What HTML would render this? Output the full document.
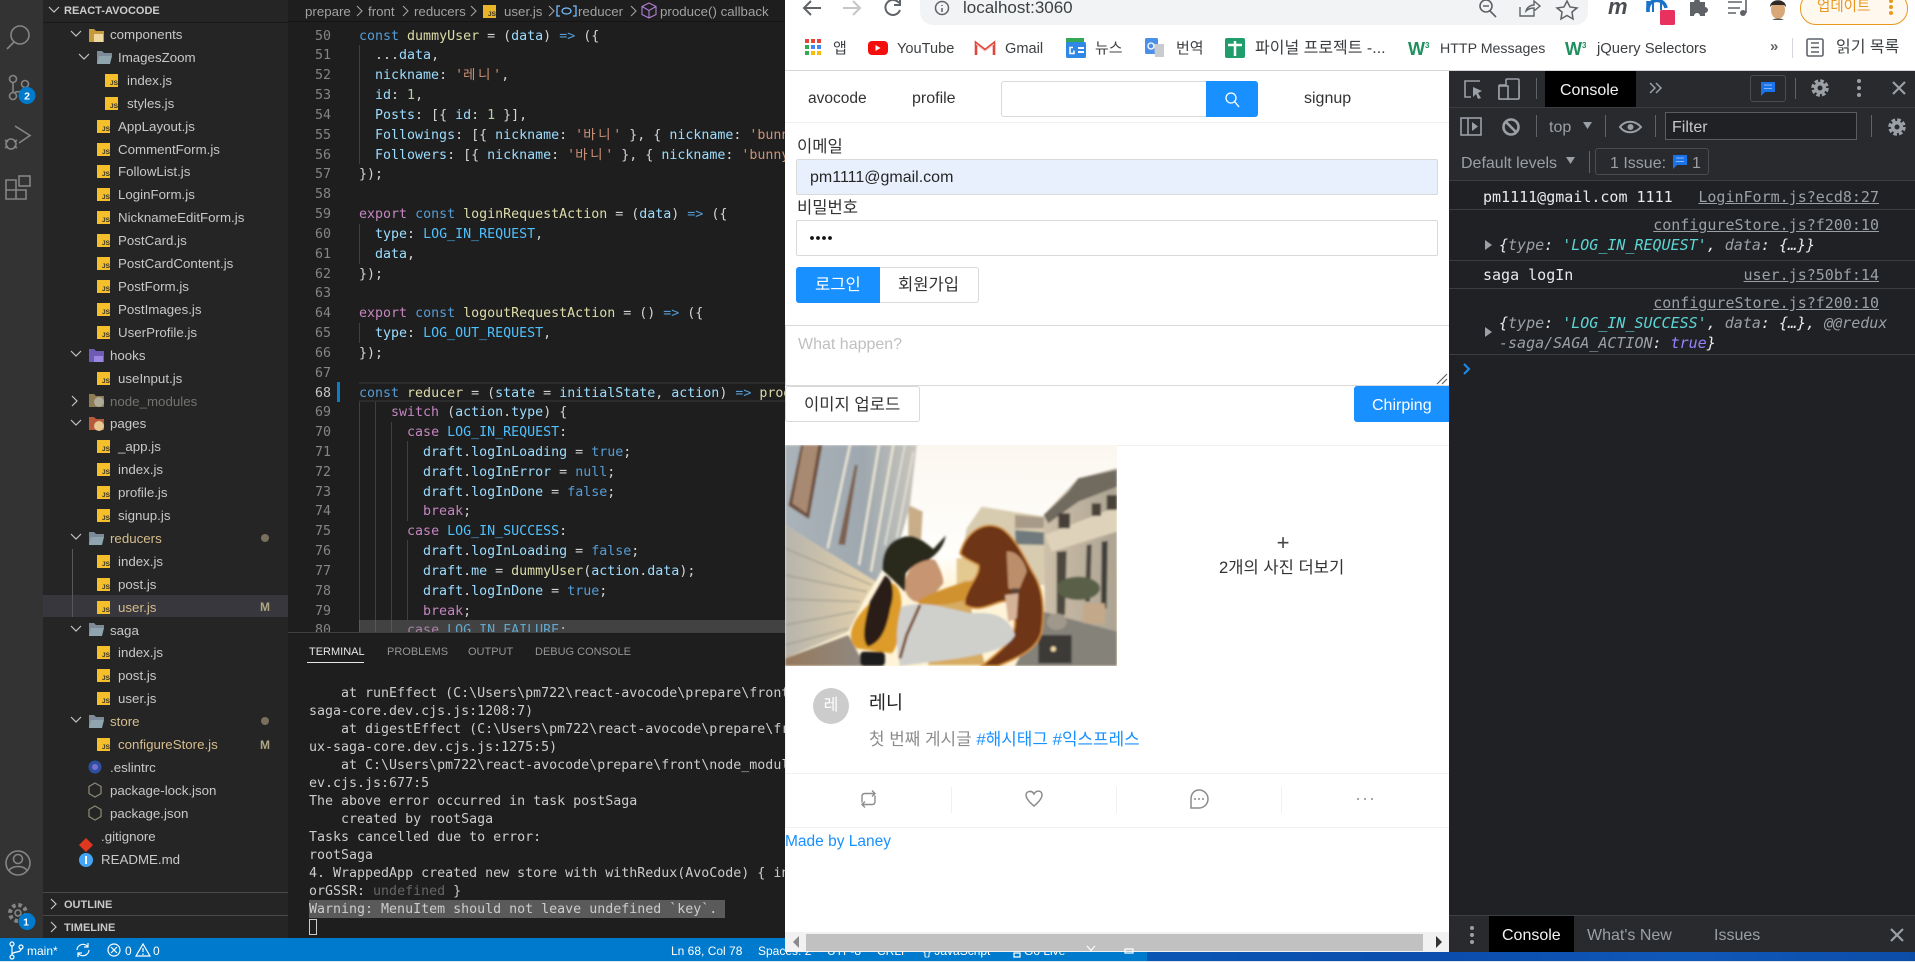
<!DOCTYPE html>
<html lang="ko"><head><meta charset="utf-8"><title>react-avocode</title>
<style>
html,body{margin:0;padding:0;width:1915px;height:962px;overflow:hidden;background:#dfe6ee}
body{position:relative;font-family:"Liberation Sans","Noto Sans CJK KR",sans-serif;color:#222}
.b{position:absolute}
.t{position:absolute;white-space:pre;line-height:20px;height:20px}
.m{font-family:"DejaVu Sans Mono","Noto Sans CJK KR",monospace}
#tree{position:absolute;left:0;top:24px;width:288px;height:850px;overflow:hidden;font-size:13.3px;color:#c8c8c8}
.r{position:relative;height:22.92px;line-height:22.92px;white-space:pre}
.r span{position:absolute;top:0}
.l0 span{left:101px}.l1 span{left:110px}.l2 span{left:118px}.l3 span{left:127px}
.js{position:absolute;top:4px;width:13px;background:#f4bf2a;color:#33302a;font:bold 6.5px/7px "Liberation Sans",sans-serif;text-align:right;padding-top:6px;height:7px;box-sizing:content-box;font-style:normal;overflow:hidden}
.l2 .js{left:97px}.l3 .js{left:105px}
.g{color:#d6bd8d}.dim{color:#73736f}
#code,#nums{position:absolute;top:26.6px;height:605.4px;overflow:hidden;font-family:"DejaVu Sans Mono","Noto Sans CJK KR",monospace;font-size:13.3px;line-height:19.83px}
#code{left:359px;width:440px;color:#d4d4d4}
#nums{left:296px;width:35px;text-align:right;color:#858585}
#code div,#nums div{height:19.83px;white-space:pre}
.k{color:#569cd6}.c{color:#c586c0}.f{color:#dcdcaa}.v{color:#9cdcfe}.o{color:#4fc1ff}.s{color:#ce9178}.n{color:#b5cea8}
.h{letter-spacing:2.8px}
.ig{position:absolute;width:1px;background:#404040}
#term{position:absolute;left:309px;top:685px;height:234px;font-family:"DejaVu Sans Mono",monospace;font-size:13.3px;line-height:18px;color:#cccccc;width:500px;overflow:hidden}
#term div{height:18px;white-space:pre}
.st{font-size:12px;color:#fff;margin-top:1px}
.cm{font-family:"DejaVu Sans Mono","Noto Sans CJK KR",monospace;font-size:15px;color:#e8eaed}
.lnk{color:#9aa0a6;text-decoration:underline;right:36px}
.dt{font-size:16px;color:#9aa0a6;margin-top:1px}
.cl{background:#202124}
.ln{position:absolute;left:1449px;width:466px;height:1px;background:#3c3d40}
.bm{font-size:14.6px;color:#3c4043}
.ko{font-size:16.6px;margin-top:2px}
</style></head><body>

<!-- VS Code -->
<div class="b" style="left:0;top:0;width:43px;height:938px;background:#333333"></div>
<div class="b" style="left:43px;top:0;width:245px;height:938px;background:#252526"></div>
<div class="b" style="left:288px;top:0;width:510px;height:938px;background:#1e1e1e"></div>
<div class="b" style="left:43px;top:595px;width:245px;height:22px;background:#37373d"></div>
<div class="b" style="left:72px;top:549px;width:1px;height:68px;background:#585858"></div>
<div class="b" style="left:43px;top:22px;width:245px;height:1px;background:#1a1a1a"></div>
<div class="t" style="left:64px;top:1px;font-size:11px;font-weight:bold;color:#cccccc">REACT-AVOCODE</div>

<div id="tree">
<div class="r l1"><span>components</span></div>
<div class="r l2"><span>ImagesZoom</span></div>
<div class="r l3"><i class="js">JS</i><span>index.js</span></div>
<div class="r l3"><i class="js">JS</i><span>styles.js</span></div>
<div class="r l2"><i class="js">JS</i><span>AppLayout.js</span></div>
<div class="r l2"><i class="js">JS</i><span>CommentForm.js</span></div>
<div class="r l2"><i class="js">JS</i><span>FollowList.js</span></div>
<div class="r l2"><i class="js">JS</i><span>LoginForm.js</span></div>
<div class="r l2"><i class="js">JS</i><span>NicknameEditForm.js</span></div>
<div class="r l2"><i class="js">JS</i><span>PostCard.js</span></div>
<div class="r l2"><i class="js">JS</i><span>PostCardContent.js</span></div>
<div class="r l2"><i class="js">JS</i><span>PostForm.js</span></div>
<div class="r l2"><i class="js">JS</i><span>PostImages.js</span></div>
<div class="r l2"><i class="js">JS</i><span>UserProfile.js</span></div>
<div class="r l1"><span>hooks</span></div>
<div class="r l2"><i class="js">JS</i><span>useInput.js</span></div>
<div class="r l1"><span class="dim">node_modules</span></div>
<div class="r l1"><span>pages</span></div>
<div class="r l2"><i class="js">JS</i><span>_app.js</span></div>
<div class="r l2"><i class="js">JS</i><span>index.js</span></div>
<div class="r l2"><i class="js">JS</i><span>profile.js</span></div>
<div class="r l2"><i class="js">JS</i><span>signup.js</span></div>
<div class="r l1"><span class="g">reducers</span></div>
<div class="r l2"><i class="js">JS</i><span>index.js</span></div>
<div class="r l2"><i class="js">JS</i><span>post.js</span></div>
<div class="r l2"><i class="js">JS</i><span class="g">user.js</span></div>
<div class="r l1"><span>saga</span></div>
<div class="r l2"><i class="js">JS</i><span>index.js</span></div>
<div class="r l2"><i class="js">JS</i><span>post.js</span></div>
<div class="r l2"><i class="js">JS</i><span>user.js</span></div>
<div class="r l1"><span class="g">store</span></div>
<div class="r l2"><i class="js">JS</i><span class="g">configureStore.js</span></div>
<div class="r l1"><span>.eslintrc</span></div>
<div class="r l1"><span>package-lock.json</span></div>
<div class="r l1"><span>package.json</span></div>
<div class="r l0"><span>.gitignore</span></div>
<div class="r l0"><span>README.md</span></div>
</div>
<div class="t" style="left:260px;top:597px;font-size:12px;font-weight:bold;color:#b0a582">M</div>
<div class="t" style="left:260px;top:735px;font-size:12px;font-weight:bold;color:#b0a582">M</div>
<div class="b" style="left:43px;top:892px;width:245px;height:1px;background:#4a4a4a"></div>
<div class="b" style="left:43px;top:915px;width:245px;height:1px;background:#4a4a4a"></div>
<div class="t" style="left:64px;top:895px;font-size:11px;font-weight:bold;color:#c8c8c8">OUTLINE</div>
<div class="t" style="left:64px;top:918px;font-size:11px;font-weight:bold;color:#c8c8c8">TIMELINE</div>

<!-- breadcrumb -->
<div style="position:absolute;left:0;top:2px;font-size:13.3px;color:#a2a2a2">
<div class="t" style="left:305px;top:0">prepare</div>
<div class="t" style="left:368px;top:0">front</div>
<div class="t" style="left:414px;top:0">reducers</div>
<div class="t" style="left:504px;top:0">user.js</div>
<div class="t" style="left:578px;top:0">reducer</div>
<div class="t" style="left:660px;top:0">produce() callback</div>
</div>
<i class="js" style="left:483px;top:5px;opacity:.95">JS</i>
<div class="b" style="left:288px;top:21px;width:510px;height:1px;background:#141414"></div>

<!-- code -->
<div class="b" style="left:359px;top:382px;width:440px;height:20px;box-sizing:border-box;border:1px solid #2c2c2c;border-width:2px 0"></div>
<div class="b" style="left:337px;top:382px;width:3px;height:20px;background:#0c7dc8"></div>
<div class="ig" style="left:359px;top:45px;height:119px"></div>
<div class="ig" style="left:359px;top:224px;height:40px"></div>
<div class="ig" style="left:359px;top:323px;height:20px"></div>
<div class="ig" style="left:359px;top:402px;height:230px"></div>
<div class="ig" style="left:375px;top:402px;height:230px"></div>
<div class="ig" style="left:391px;top:422px;height:210px"></div>
<div class="ig" style="left:407px;top:441px;height:80px"></div>
<div class="ig" style="left:407px;top:540px;height:80px"></div>
<div id="nums">
<div>50</div><div>51</div><div>52</div><div>53</div><div>54</div><div>55</div><div>56</div><div>57</div><div>58</div><div>59</div><div>60</div><div>61</div><div>62</div><div>63</div><div>64</div><div>65</div><div>66</div><div>67</div><div style="color:#c6c6c6">68</div><div>69</div><div>70</div><div>71</div><div>72</div><div>73</div><div>74</div><div>75</div><div>76</div><div>77</div><div>78</div><div>79</div><div>80</div>
</div>
<div id="code">
<div><span class="k">const</span> <span class="f">dummyUser</span> = (<span class="v">data</span>) <span class="k">=&gt;</span> ({</div>
<div>  ...<span class="v">data</span>,</div>
<div>  <span class="v">nickname</span>: <span class="s">'<span class="h">레니</span>'</span>,</div>
<div>  <span class="v">id</span>: <span class="n">1</span>,</div>
<div>  <span class="v">Posts</span>: [{ <span class="v">id</span>: <span class="n">1</span> }],</div>
<div>  <span class="v">Followings</span>: [{ <span class="v">nickname</span>: <span class="s">'<span class="h">바니</span>'</span> }, { <span class="v">nickname</span>: <span class="s">'bunny'</span> }],</div>
<div>  <span class="v">Followers</span>: [{ <span class="v">nickname</span>: <span class="s">'<span class="h">바니</span>'</span> }, { <span class="v">nickname</span>: <span class="s">'bunny'</span> }],</div>
<div>});</div>
<div> </div>
<div><span class="c">export</span> <span class="k">const</span> <span class="f">loginRequestAction</span> = (<span class="v">data</span>) <span class="k">=&gt;</span> ({</div>
<div>  <span class="v">type</span>: <span class="o">LOG_IN_REQUEST</span>,</div>
<div>  <span class="v">data</span>,</div>
<div>});</div>
<div> </div>
<div><span class="c">export</span> <span class="k">const</span> <span class="f">logoutRequestAction</span> = () <span class="k">=&gt;</span> ({</div>
<div>  <span class="v">type</span>: <span class="o">LOG_OUT_REQUEST</span>,</div>
<div>});</div>
<div> </div>
<div><span class="k">const</span> <span class="f">reducer</span> = (<span class="v">state</span> = <span class="v">initialState</span>, <span class="v">action</span>) <span class="k">=&gt;</span> <span class="f">produce</span>(<span class="v">state</span>)</div>
<div>    <span class="c">switch</span> (<span class="v">action</span>.<span class="v">type</span>) {</div>
<div>      <span class="c">case</span> <span class="o">LOG_IN_REQUEST</span>:</div>
<div>        <span class="v">draft</span>.<span class="v">logInLoading</span> = <span class="k">true</span>;</div>
<div>        <span class="v">draft</span>.<span class="v">logInError</span> = <span class="k">null</span>;</div>
<div>        <span class="v">draft</span>.<span class="v">logInDone</span> = <span class="k">false</span>;</div>
<div>        <span class="c">break</span>;</div>
<div>      <span class="c">case</span> <span class="o">LOG_IN_SUCCESS</span>:</div>
<div>        <span class="v">draft</span>.<span class="v">logInLoading</span> = <span class="k">false</span>;</div>
<div>        <span class="v">draft</span>.<span class="v">me</span> = <span class="f">dummyUser</span>(<span class="v">action</span>.<span class="v">data</span>);</div>
<div>        <span class="v">draft</span>.<span class="v">logInDone</span> = <span class="k">true</span>;</div>
<div>        <span class="c">break</span>;</div>
<div>      <span class="c">case</span> <span class="o">LOG_IN_FAILURE</span>:</div>
</div>
<div class="b" style="left:359px;top:620px;width:440px;height:12px;background:rgba(125,125,125,.38)"></div>

<!-- terminal -->
<div class="b" style="left:288px;top:632px;width:510px;height:306px;background:#1e1e1e;border-top:1px solid #404040;box-sizing:border-box"></div>
<div style="position:absolute;left:0;top:1px;font-size:11px;color:#969696">
<div class="t" style="left:309px;top:641px;color:#e7e7e7">TERMINAL</div>
<div class="t" style="left:387px;top:641px">PROBLEMS</div>
<div class="t" style="left:468px;top:641px">OUTPUT</div>
<div class="t" style="left:535px;top:641px">DEBUG CONSOLE</div>
</div>
<div class="b" style="left:307px;top:662px;width:57px;height:1px;background:#e7e7e7"></div>
<div class="b" style="left:309px;top:900px;width:416px;height:18px;background:#5a5a5a"></div>
<div id="term">
<div>    at runEffect (C:\Users\pm722\react-avocode\prepare\front\node</div>
<div>saga-core.dev.cjs.js:1208:7)</div>
<div>    at digestEffect (C:\Users\pm722\react-avocode\prepare\front\n</div>
<div>ux-saga-core.dev.cjs.js:1275:5)</div>
<div>    at C:\Users\pm722\react-avocode\prepare\front\node_modules\re</div>
<div>ev.cjs.js:677:5</div>
<div>The above error occurred in task postSaga</div>
<div>    created by rootSaga</div>
<div>Tasks cancelled due to error:</div>
<div>rootSaga</div>
<div>4. WrappedApp created new store with withRedux(AvoCode) { initial</div>
<div>orGSSR: <span style="color:#666">undefined</span> }</div>
<div>Warning: MenuItem should not leave undefined `key`.</div>
</div>
<div class="b" style="left:309px;top:919px;width:8px;height:16px;border:1px solid #ccc;box-sizing:border-box"></div>

<!-- status bar -->
<div class="b" style="left:0;top:938px;width:1150px;height:23px;background:#007acc"></div>
<div class="b" style="left:1147px;top:952px;width:768px;height:9px;background:linear-gradient(90deg,#0a55b4,#0b4dac 40%,#1058b8 70%,#0c4da8)"></div>
<div class="t st" style="left:27px;top:940px">main*</div>
<div class="t st" style="left:125px;top:940px">0</div>
<div class="t st" style="left:153px;top:940px">0</div>
<div class="t st" style="left:671px;top:940px">Ln 68, Col 78</div>
<div class="t st" style="left:758px;top:940px">Spaces: 2</div>
<div class="t st" style="left:827px;top:940px">UTF-8</div>
<div class="t st" style="left:877px;top:940px">CRLF</div>
<div class="t st" style="left:923px;top:940px">{} JavaScript</div>
<div class="t st" style="left:1024px;top:940px">Go Live</div>

<!-- Browser -->
<div class="b" style="left:785px;top:0;width:1130px;height:952px;background:#fff"></div>
<div class="b" style="left:920px;top:0;width:668px;height:25px;background:#f1f3f4;border-radius:0 0 13px 13px"></div>
<div class="t" style="left:963px;top:-2px;font-size:17px;color:#3c4043">localhost:3060</div>
<div class="b" style="left:785px;top:70px;width:1130px;height:1px;background:#d5d7da"></div>

<!-- bookmarks -->
<div class="t" style="left:833px;top:39px;font-size:15px;color:#3c4043">앱</div>
<div class="t bm" style="left:897px;top:39px">YouTube</div>
<div class="t bm" style="left:1005px;top:39px">Gmail</div>
<div class="t" style="left:1095px;top:39px;font-size:15px;color:#3c4043">뉴스</div>
<div class="t" style="left:1176px;top:39px;font-size:15px;color:#3c4043">번역</div>
<div class="t" style="left:1255px;top:39px;font-size:16px;color:#3c4043">파이널 프로젝트 -...</div>
<div class="t" style="left:1440px;top:39px;font-size:14.2px;color:#3c4043">HTTP Messages</div>
<div class="t" style="left:1597px;top:39px;font-size:14.8px;color:#3c4043">jQuery Selectors</div>
<div class="t" style="left:1408px;top:39px;font:bold 18px/20px 'Liberation Sans',sans-serif;color:#1f8f5f">W<sup style="font-size:8px;line-height:0;color:#1f8f5f">3</sup></div>
<div class="t" style="left:1565px;top:39px;font:bold 18px/20px 'Liberation Sans',sans-serif;color:#1f8f5f">W<sup style="font-size:8px;line-height:0;color:#1f8f5f">3</sup></div>
<div class="t" style="left:1770px;top:37px;font-size:15px;font-weight:bold;color:#5f6368">»</div>
<div class="t" style="left:1836px;top:38px;font-size:16px;color:#3c4043">읽기 목록</div>
<div class="t" style="left:1617px;top:-3px;font:italic bold 22px/20px 'Liberation Sans',sans-serif;color:#4a4d52;transform:translateX(-9px)">m</div>
<div class="b" style="left:1800px;top:-8px;width:108px;height:33px;border:1.5px solid #e8981f;border-radius:16px;background:#fff8ee;box-sizing:border-box"></div>
<div class="t" style="left:1817px;top:-3px;font-size:14.5px;color:#e8981f">업데이트</div>

<!-- nav -->
<div class="b" style="left:785px;top:122px;width:664px;height:1px;background:#f0f0f0"></div>
<div class="t" style="left:808px;top:89px;font-size:15.5px;color:#333">avocode</div>
<div class="t" style="left:912px;top:89px;font-size:16px;color:#333">profile</div>
<div class="t" style="left:1304px;top:89px;font-size:16px;color:#333">signup</div>
<div class="b" style="left:1001px;top:81px;width:206px;height:36px;border:1px solid #d9d9d9;border-radius:3px 0 0 3px;box-sizing:border-box"></div>
<div class="b" style="left:1206px;top:81px;width:52px;height:36px;background:#1890ff;border-radius:0 3px 3px 0"></div>

<!-- form -->
<div class="t ko" style="left:797px;top:135px;color:#333">이메일</div>
<div class="b" style="left:796px;top:159px;width:642px;height:36px;background:#e8f0fe;border:1px solid #d9d9d9;border-radius:2px;box-sizing:border-box"></div>
<div class="t" style="left:810px;top:168px;font-size:16px;color:#262626">pm1111@gmail.com</div>
<div class="t ko" style="left:797px;top:196px;color:#333">비밀번호</div>
<div class="b" style="left:796px;top:220px;width:642px;height:36px;border:1px solid #d9d9d9;border-radius:2px;box-sizing:border-box"></div>
<div class="b" style="left:796px;top:267px;width:84px;height:36px;background:#1890ff;border-radius:3px 0 0 3px"></div>
<div class="b" style="left:880px;top:267px;width:99px;height:36px;border:1px solid #d9d9d9;border-left:0;border-radius:0 3px 3px 0;box-sizing:border-box"></div>
<div class="t ko" style="left:815px;top:273px;color:#fff">로그인</div>
<div class="t ko" style="left:898px;top:273px;color:#333">회원가입</div>

<div class="b" style="left:785px;top:325px;width:664px;height:61px;border:1px solid #d9d9d9;border-width:1px 0 1px 1px;box-sizing:border-box"></div>
<div class="t" style="left:798px;top:335px;font-size:16px;color:#bfbfbf">What happen?</div>
<div class="b" style="left:785px;top:386px;width:135px;height:36px;border:1px solid #d9d9d9;border-radius:3px;box-sizing:border-box"></div>
<div class="t ko" style="left:804px;top:393px;color:#333">이미지 업로드</div>
<div class="b" style="left:1354px;top:386px;width:95px;height:36px;background:#1890ff;border-radius:3px 0 0 3px"></div>
<div class="t" style="left:1372px;top:396px;font-size:16px;color:#fff">Chirping</div>

<div class="b" style="left:785px;top:445px;width:664px;height:1px;background:#f0f0f0"></div>
<div class="b" style="left:785px;top:445px;width:1px;height:382px;background:#f0f0f0"></div>
<div class="b" style="left:785px;top:773px;width:664px;height:1px;background:#f0f0f0"></div>
<div class="b" style="left:785px;top:827px;width:664px;height:1px;background:#f0f0f0"></div>
<div class="b" style="left:951px;top:787px;width:1px;height:26px;background:#f0f0f0"></div>
<div class="b" style="left:1116px;top:787px;width:1px;height:26px;background:#f0f0f0"></div>
<div class="b" style="left:1281px;top:787px;width:1px;height:26px;background:#f0f0f0"></div>

<!-- photo -->
<svg class="b" style="left:785px;top:445px" width="332" height="221" viewBox="0 0 996 663" preserveAspectRatio="none">
<defs>
<filter id="bl" x="-5%" y="-5%" width="110%" height="110%"><feGaussianBlur stdDeviation="3.500"/></filter>
<linearGradient id="sky" x1="0" y1="0" x2="0" y2="1"><stop offset="0" stop-color="#fbf7f0"/><stop offset=".5" stop-color="#fffefb"/><stop offset=".65" stop-color="#fff4d8"/></linearGradient>
<linearGradient id="lb" x1="0" y1="0" x2="1" y2="0"><stop offset="0" stop-color="#aab3b9"/><stop offset=".6" stop-color="#9ea8ae"/><stop offset="1" stop-color="#c9c6bc"/></linearGradient>
<linearGradient id="base" x1="0" y1="0" x2="1" y2="0"><stop offset="0" stop-color="#b7b4ac"/><stop offset="1" stop-color="#e5d2ab"/></linearGradient>
<linearGradient id="rb" x1="0" y1="0" x2="1" y2="0"><stop offset="0" stop-color="#cdbfa9"/><stop offset="1" stop-color="#aca392"/></linearGradient>
<linearGradient id="road" x1="0" y1="0" x2="1" y2="0"><stop offset="0" stop-color="#96785c"/><stop offset="1" stop-color="#8f8a82"/></linearGradient>
</defs>
<rect width="996" height="663" fill="url(#sky)"/>
<g filter="url(#bl)">
<polygon points="370,180 413,200 408,285 370,285" fill="#c9ad88"/>
<polygon points="0,0 395,0 375,180 350,270 272,410 0,240" fill="url(#lb)"/>
<polygon points="0,240 272,410 240,460 190,560 0,640" fill="url(#base)"/>
<g stroke="#ece6d6" stroke-width="7" fill="none"><path d="M222 360L282 0"/><path d="M258 380L325 0"/><path d="M128 310L195 0"/></g>
<g stroke="#e4e2d8" stroke-width="5" fill="none"><path d="M300 300L360 0"/><path d="M335 280L385 20"/></g>
<polygon points="10,182 48,0 112,0 72,222" fill="#6f4f3c"/>
<polygon points="22,175 55,0 100,0 65,205" fill="#a88a73"/>
<polygon points="160,298 210,60 218,60 180,300" fill="#7e6150"/>
<g stroke="#98958a" stroke-width="3" fill="none"><path d="M0 310L260 420"/><path d="M0 390L245 440"/><path d="M0 462L225 470"/><path d="M0 540L210 500"/><path d="M0 600L190 550"/></g>
<polygon points="0,640 190,570 240,663 0,663" fill="url(#road)"/>
<polygon points="590,185 680,200 780,215 790,420 560,420 515,420 545,250" fill="#d8ccb0"/>
<polygon points="690,255 780,262 782,300 692,298" fill="#6f7a7d"/>
<polygon points="690,210 780,218 785,250 690,250" fill="#a89a88"/>
<polygon points="515,340 580,340 590,420 515,420" fill="#e3c890"/>
<polygon points="776,210 880,100 996,70 996,560 780,560" fill="url(#rb)"/>
<polygon points="776,210 850,140 880,100 996,75 996,125 880,170 790,235" fill="#6f6a5e"/>
<polygon points="780,270 996,185 996,260 800,320" fill="#dfd2ba"/>
<rect x="820" y="205" width="35" height="45" fill="#463f37"/><rect x="920" y="175" width="28" height="38" fill="#4a4238"/><rect x="965" y="150" width="31" height="45" fill="#4a4238"/>
<polygon points="815,320 845,318 840,510 815,510" fill="#4e4a40"/><polygon points="905,300 920,298 915,470 900,470" fill="#4b4a3f"/><polygon points="950,290 968,288 965,490 948,490" fill="#40403a"/>
<polygon points="775,500 996,560 996,663 690,663" fill="#85827a"/>
<ellipse cx="880" cy="430" rx="65" ry="35" fill="#5a6046"/>
<rect x="895" y="475" width="65" height="60" fill="#c4a88a"/>
<rect x="760" y="570" width="100" height="85" fill="#3c3a38"/><ellipse cx="815" cy="530" rx="30" ry="25" fill="#a0988a"/><circle cx="805" cy="612" r="8" fill="#f3d8a4"/>
<polygon points="430,660 440,450 545,405 560,500 600,660" fill="#d6ac62"/>
<path d="M305 420C330 400 355 440 348 490C342 540 345 600 320 625L215 610C185 585 195 540 235 495Z" fill="#dd9c2c"/>
<path d="M300 392C322 400 332 440 316 490C305 550 290 590 250 605C228 590 238 530 255 470Z" fill="#2a1a12"/>
<path d="M525 325C545 255 600 225 650 250C690 275 720 340 745 385C775 430 780 500 770 560C755 620 690 640 640 663L590 663C640 620 690 590 690 530L670 470C640 460 590 510 540 480C530 440 590 390 580 360C560 350 535 340 525 325Z" fill="#6e3618" stroke="#d8923e" stroke-width="5"/>
<path d="M362 440C350 380 400 330 450 345C475 385 480 420 470 420C450 450 420 470 390 470C378 465 368 455 362 440Z" fill="#c79571"/>
<path d="M292 375C290 310 320 275 380 273C405 278 430 300 445 312L482 272C478 300 460 325 430 345C400 350 380 365 362 385L360 440C340 420 320 400 292 375Z" fill="#2c2a1f"/>
<path d="M395 470C440 440 510 420 565 405L540 465C500 480 450 480 410 480Z" fill="#d0922e"/>
<path d="M350 485C420 465 480 490 560 505C620 500 670 510 690 570C670 610 610 625 520 640L345 663C330 600 335 530 350 485Z" fill="#cfd0cc"/>
<path d="M660 450L700 445L695 520L670 530Z" fill="#d6b398"/>
<path d="M665 320C690 315 720 345 725 380L700 440L670 430Z" fill="#bd8e6a"/>
<rect x="680" y="430" width="22" height="14" fill="#54453a"/>
<path d="M405 480L365 570L345 640" stroke="#7a4a2a" stroke-width="9" fill="none"/>
<rect x="225" y="620" width="75" height="43" rx="12" fill="#1f1e1e"/>
</g>
</svg>
<div class="t" style="left:1275px;top:533px;font-size:22px;font-weight:300;color:#444;width:16px;text-align:center">+</div>
<div class="t ko" style="left:1219px;top:556px;color:#333">2개의 사진 더보기</div>

<div class="b" style="left:813px;top:688px;width:36px;height:36px;border-radius:50%;background:#cccccc;color:#fff;text-align:center;font-size:16px;line-height:36px">레</div>
<div class="t" style="left:869px;top:693px;font-size:18.5px;color:#262626">레니</div>
<div class="t ko" style="left:869px;top:728px;color:#8c8c8c;font-size:16.9px">첫 번째 게시글 <span style="color:#1890ff">#해시태그 #익스프레스</span></div>
<div class="t" style="left:785px;top:832px;font-size:15.500px;color:#1890ff">Made by Laney</div>

<!-- scrollbar -->
<div class="b" style="left:785px;top:932px;width:664px;height:20px;background:#f1f1f1"></div>
<div class="b" style="left:806px;top:934px;width:617px;height:17px;background:#c1c1c1"></div>

<!-- devtools -->
<div class="b cl" style="left:1449px;top:71px;width:466px;height:881px"></div>
<div class="b" style="left:1449px;top:71px;width:466px;height:36px;background:#292a2d"></div>
<div class="b" style="left:1449px;top:107px;width:466px;height:73px;background:#292a2d"></div>
<div class="b" style="left:1545px;top:71px;width:91px;height:36px;background:#000"></div>
<div class="t" style="left:1560px;top:81px;font-size:16px;color:#f1f3f4">Console</div>
<div class="ln" style="top:107px"></div>
<div class="ln" style="top:180px"></div>
<div class="b" style="left:1750px;top:75px;width:36px;height:27px;border:1px solid #4a4c50;border-radius:3px;box-sizing:border-box"></div>
<div class="t dt" style="left:1549px;top:117px">top</div>
<div class="b" style="left:1665px;top:112px;width:192px;height:28px;background:#202124;border:1px solid #5a5c60;box-sizing:border-box"></div>
<div class="t dt" style="left:1672px;top:117px;color:#c4c7cb">Filter</div>
<div class="t dt" style="left:1461px;top:153px">Default levels</div>
<div class="b" style="left:1595px;top:148px;width:114px;height:27px;border:1px solid #4a4c50;border-radius:3px;box-sizing:border-box"></div>
<div class="t dt" style="left:1610px;top:153px">1 Issue:</div>
<div class="t dt" style="left:1692px;top:153px">1</div>

<div class="b cl" style="left:1449px;top:181px;width:466px;height:734px"></div>
<div class="ln" style="top:209px"></div>
<div class="ln" style="top:260px"></div>
<div class="ln" style="top:288px"></div>
<div class="ln" style="top:354px"></div>
<div class="t cm" style="left:1483px;top:187px">pm1111@gmail.com 1111</div>
<div class="t cm lnk" style="top:187px">LoginForm.js?ecd8:27</div>
<div class="t cm lnk" style="top:215px">configureStore.js?f200:10</div>
<div class="t cm" style="left:1499px;top:235px;font-style:italic">{<span style="color:#9aa0a6">type</span>: <span style="color:#5cd5d5">'LOG_IN_REQUEST'</span>, <span style="color:#9aa0a6">data</span>: {…}}</div>
<div class="t cm" style="left:1483px;top:265px">saga logIn</div>
<div class="t cm lnk" style="top:265px">user.js?50bf:14</div>
<div class="t cm lnk" style="top:293px">configureStore.js?f200:10</div>
<div class="t cm" style="left:1499px;top:313px;font-style:italic">{<span style="color:#9aa0a6">type</span>: <span style="color:#5cd5d5">'LOG_IN_SUCCESS'</span>, <span style="color:#9aa0a6">data</span>: {…}, <span style="color:#9aa0a6">@@redux</span></div>
<div class="t cm" style="left:1499px;top:333px;font-style:italic"><span style="color:#9aa0a6">-saga/SAGA_ACTION</span>: <span style="color:#9980ff">true</span>}</div>

<div class="b" style="left:1449px;top:915px;width:466px;height:37px;background:#292a2d;border-top:1px solid #3f4043;box-sizing:border-box"></div>
<div class="b" style="left:1489px;top:916px;width:85px;height:36px;background:#000"></div>
<div class="t" style="left:1502px;top:926px;font-size:16px;color:#f1f3f4">Console</div>
<div class="t dt" style="left:1587px;top:925px">What's New</div>
<div class="t dt" style="left:1714px;top:925px">Issues</div>

<!-- icon overlay -->
<svg class="b" style="left:0;top:0" width="1915" height="962" viewBox="0 0 1915 962">
<g fill="none" stroke="#858585" stroke-width="1.6">
<circle cx="20" cy="35" r="9"/><path d="M14 42L7 49"/>
<circle cx="13" cy="79" r="3.5"/><circle cx="13" cy="96" r="3.5"/><circle cx="25" cy="84" r="3.5"/><path d="M13 83V92M25 88C25 94 16 90 14 93"/>
<path d="M15 126L30 135.5L19 143"/><circle cx="11" cy="144" r="5"/><path d="M5 140L8 142M5 148L8 146M17 140L14 142M17 148L14 146"/>
<path d="M6 180H16V199H6ZM6 190H26V199H16V190"/><rect x="19" y="176" width="11" height="10"/>
<circle cx="18" cy="863" r="12"/><circle cx="18" cy="859" r="4.5"/><path d="M9 871C11 865 25 865 27 871"/>
<circle cx="18" cy="913" r="8" stroke-width="4" stroke-dasharray="3.5 2.8"/><circle cx="18" cy="913" r="3"/>
</g>
<circle cx="27" cy="95.5" r="8.5" fill="#007acc"/><text x="27" y="99.5" fill="#fff" font-size="10.5" font-weight="bold" font-family="Liberation Sans" text-anchor="middle">2</text>
<circle cx="27" cy="921.5" r="8.5" fill="#007acc"/><text x="26" y="925.5" fill="#fff" font-size="10.5" font-weight="bold" font-family="Liberation Sans" text-anchor="middle">1</text>
<!-- chevrons -->
<g fill="none" stroke="#c5c5c5" stroke-width="1.2">
<path d="M49 7L54 12L59 7"/>
<path d="M71 31L76 36L81 31"/><path d="M79 54L84 59L89 54"/><path d="M71 351L76 356L81 351"/><path d="M72 396L77 401L72 406"/><path d="M71 420L76 425L81 420"/><path d="M71 534L76 539L81 534"/><path d="M71 626L76 631L81 626"/><path d="M71 717L76 722L81 717"/>
<path d="M51 899L56 904L51 909"/><path d="M51 922L56 927L51 932"/>
</g>
<!-- folders -->
<g>
<path d="M89 29h5l2 2h8v11h-15z" fill="#c49a3c"/><rect x="94" y="34" width="9" height="8" fill="#efd7a0"/>
<path d="M97 51h5l2 2h8v3h-11l-3 8h-1z" fill="#7d8b99"/><path d="M99 56h13l-2 8h-13z" fill="#90a4ae"/>
<path d="M89 349h5l2 2h8v11h-15z" fill="#6f5bb5"/><path d="M94 356h9v6h-9z" fill="#9b86e0"/>
<path d="M89 394h5l2 2h8v11h-15z" fill="#8c7b55"/><circle cx="99" cy="402" r="5" fill="#b0aa98"/>
<path d="M89 417h5l2 2h8v11h-15z" fill="#b85a3c"/><circle cx="99" cy="426" r="5" fill="#e8c890"/>
<path d="M89 532h5l2 2h8v3h-11l-3 8h-1z" fill="#7d8b99"/><path d="M91 537h13l-2 8h-13z" fill="#90a4ae"/>
<path d="M89 623h5l2 2h8v3h-11l-3 8h-1z" fill="#7d8b99"/><path d="M91 628h13l-2 8h-13z" fill="#90a4ae"/>
<path d="M89 715h5l2 2h8v3h-11l-3 8h-1z" fill="#7d8b99"/><path d="M91 720h13l-2 8h-13z" fill="#90a4ae"/>
<circle cx="95" cy="767" r="6.5" fill="#2d4f9e"/><circle cx="95" cy="767" r="3" fill="#7a6fd0"/>
<path d="M95 783l6 3.5v7l-6 3.5l-6-3.5v-7z" fill="none" stroke="#8a8570" stroke-width="1.3"/>
<path d="M95 806l6 3.5v7l-6 3.5l-6-3.5v-7z" fill="none" stroke="#8a8570" stroke-width="1.3"/>
<path d="M86 838l7 7l-7 7l-7-7z" fill="#e0381f"/>
<circle cx="86" cy="860" r="7" fill="#42a5f5"/><rect x="85" y="856" width="2" height="8" fill="#fff"/>
<circle cx="265" cy="538" r="4" fill="#7a6f5c"/><circle cx="265" cy="721" r="4" fill="#7a6f5c"/>
</g>
<!-- breadcrumb chevrons + symbols -->
<g fill="none" stroke="#a2a2a2" stroke-width="1.1">
<path d="M357 6L362 11L357 16"/><path d="M403 6L408 11L403 16"/><path d="M471 6L476 11L471 16"/><path d="M549 6L554 11L549 16"/><path d="M631 6L636 11L631 16"/>
</g>
<path d="M560 6h-3v10h3M573 6h3v10h-3" fill="none" stroke="#75beff" stroke-width="1.3"/><ellipse cx="566.500" cy="11" rx="4.500" ry="3" fill="none" stroke="#75beff" stroke-width="1.3"/>
<path d="M649 3l7 3.500v8l-7 3.500l-7-3.500v-8zM642 6.500l7 4l7-4M649 10.500v7.500" fill="none" stroke="#b180d7" stroke-width="1.1"/>
<!-- status icons -->
<g fill="none" stroke="#fff" stroke-width="1.2">
<circle cx="12" cy="944" r="2"/><circle cx="12" cy="957" r="2"/><circle cx="21" cy="947" r="2"/><path d="M12 946V955M21 949C21 953 14 951 12 954"/>
<path d="M77 950a6 6 0 0 1 11-3M89 950a6 6 0 0 1-11 3"/><path d="M88 943v4h-4M78 957v-4h4"/>
<circle cx="114" cy="950" r="6"/><path d="M111 947L117 953M117 947L111 953"/>
<path d="M143 944L150 956H136ZM143 948V952M143 953.500V955"/>
<path d="M1087 946l4 4.500l4-4.500"/><path d="M1125 949h8v4h-8z"/>
<path d="M1014 953h6v4h-6z"/>
</g>
<!-- browser toolbar -->
<g fill="none" stroke="#5f6368" stroke-width="2">
<path d="M821 8H804M811 1L804 8L811 15"/>
<path d="M843 8H860M853 1L860 8L853 15" stroke="#c4c7c5"/>
<path d="M899 3A7.500 7.500 0 1 0 900 10M900 0V5H894"/>
<circle cx="942" cy="8" r="6.500" stroke-width="1.500"/><path d="M942 5V6M942 8V12" stroke-width="1.500"/>
<circle cx="1486" cy="6" r="6" stroke-width="1.600"/><path d="M1490 11L1496 17M1483 6H1489" stroke-width="1.600"/>
<path d="M1520 7V16H1534V12M1526 11C1527 7 1531 5 1534 5V1L1540 6L1534 11V8C1531 8 1528 9 1526 11Z" stroke-width="1.400"/>
<path d="M1567 1L1570 7L1577 8L1572 12L1573 19L1567 15.500L1561 19L1562 12L1557 8L1564 7Z" stroke-width="1.500"/>
<path d="M1728 2H1742M1728 8H1740M1728 13H1736M1746 0V13" stroke-width="1.600"/>
</g>
<circle cx="1743" cy="13" r="3" fill="#5f6368"/>
<path d="M1648 11A9 9 0 0 1 1666 8" fill="none" stroke="#1a73c8" stroke-width="3.500"/>
<path d="M1648 1V12" stroke="#1a73c8" stroke-width="3.500"/>
<path d="M1653 12V3M1661 10V3" stroke="#1a73c8" stroke-width="2"/>
<rect x="1660" y="10" width="15" height="15" rx="1.500" fill="#e8315f"/>
<path d="M1690 2h4a3 3 0 0 1 6 0h5v5a3 3 0 0 1 0 6v3h-5a3 3 0 0 0-6 0h-4z" fill="#5f6368"/>
<ellipse cx="1778" cy="10" rx="7" ry="9" fill="#d9a878"/><path d="M1770 7c0-9 16-9 16 0l-2-2h-12z" fill="#2d2a28"/><path d="M1772 20c3-2 9-2 12 0z" fill="#555"/>
<g fill="#e8981f"><circle cx="1891" cy="1" r="2"/><circle cx="1891" cy="7" r="2"/><circle cx="1891" cy="13" r="2"/></g>
<!-- bookmark icons -->
<g>
<rect x="805" y="39" width="4" height="4" fill="#ea4335"/><rect x="811" y="39" width="4" height="4" fill="#ea4335"/><rect x="817" y="39" width="4" height="4" fill="#ea4335"/>
<rect x="805" y="45" width="4" height="4" fill="#34a853"/><rect x="811" y="45" width="4" height="4" fill="#4285f4"/><rect x="817" y="45" width="4" height="4" fill="#4285f4"/>
<rect x="805" y="51" width="4" height="4" fill="#34a853"/><rect x="811" y="51" width="4" height="4" fill="#fbbc05"/><rect x="817" y="51" width="4" height="4" fill="#fbbc05"/>
<rect x="868" y="41" width="20" height="14" rx="4" fill="#f40e0e"/><path d="M875.500 45v6l5-3z" fill="#fff"/>
<path d="M976 55V43L985 50L994 43V55" fill="none" stroke="#e0453a" stroke-width="2.600"/><path d="M976 44L985 51L994 44" fill="none" stroke="#f3d4cf" stroke-width="1"/>
<rect x="1066" y="38" width="18" height="5" fill="#34a853"/><rect x="1066" y="42" width="20" height="16" rx="1.500" fill="#2f88e6"/><rect x="1078" y="47" width="6" height="2" fill="#fff"/><rect x="1078" y="51" width="6" height="2" fill="#fff"/><path d="M1073 47.500h-3v6h4v-3" fill="none" stroke="#fff" stroke-width="1.500"/>
<rect x="1145" y="38" width="13" height="16" rx="1.500" fill="#4a8fe8"/><path d="M1154 44h10v13h-9z" fill="#c8cbd0"/><circle cx="1151" cy="46" r="3" fill="none" stroke="#fff" stroke-width="1.300"/>
<rect x="1225" y="38" width="20" height="20" rx="2" fill="#1f9d6b"/><path d="M1228 45H1242M1235 41V56" stroke="#fff" stroke-width="2.500"/>
<rect x="1807" y="39" width="16" height="17" rx="1.500" fill="none" stroke="#5f6368" stroke-width="1.600"/><path d="M1811 43h8M1811 47.500h8M1811 52h8" stroke="#5f6368" stroke-width="1.500"/>
<rect x="1792" y="38" width="1" height="20" fill="#d5d7da"/>
</g>
<!-- page icons -->
<circle cx="1231" cy="98" r="5" fill="none" stroke="#fff" stroke-width="1.300"/><path d="M1235 102L1239 107" stroke="#fff" stroke-width="1.400"/>
<g fill="#111"><circle cx="812" cy="238" r="1.900"/><circle cx="818" cy="238" r="1.900"/><circle cx="824" cy="238" r="1.900"/><circle cx="830" cy="238" r="1.900"/></g>
<path d="M1437 384L1447 374M1442 384L1447 379" stroke="#666" stroke-width="1.200"/>
<!-- post actions -->
<g fill="none" stroke="#8c8c8c" stroke-width="1.400">
<path d="M862 803V797C862 795 863 794 865 794H875M872 791L875 794L872 797M875 796V802C875 804 874 805 872 805H862M865 808L862 805L865 802" transform="translate(0,-0.500)"/>
<path d="M1034 806C1028 801 1026 798 1026 795C1026 791 1032 790 1034 794C1036 790 1042 790 1042 795C1042 798 1040 801 1034 806Z" stroke-width="1.500"/>
<path d="M1199 790C1204 790 1208 794 1208 799C1208 804 1204 808 1199 808H1191V799C1191 794 1194 790 1199 790Z" stroke-width="1.500"/>
</g>
<g fill="#8c8c8c"><circle cx="1195" cy="799" r="1"/><circle cx="1199" cy="799" r="1"/><circle cx="1203" cy="799" r="1"/><circle cx="1358" cy="799" r="1"/><circle cx="1365" cy="799" r="1"/><circle cx="1372" cy="799" r="1"/></g>
<!-- scrollbar arrows -->
<path d="M799 936v12l-6-6z" fill="#8a8a8a"/><path d="M1436 936v12l6-6z" fill="#333"/>
<!-- devtools icons -->
<g fill="none" stroke="#9aa0a6" stroke-width="1.600">
<path d="M1480 81H1465V97H1471"/><path d="M1473 87L1482 91L1478 93L1481 98L1478 99L1476 94L1473 97Z" fill="#9aa0a6" stroke="none"/>
<rect x="1499" y="85" width="20" height="14" rx="1"/><rect x="1506" y="79" width="13" height="20" rx="1" fill="#292a2d"/><rect x="1499" y="86" width="9" height="13" fill="#292a2d"/>
<path d="M1650 83L1655 88L1650 93M1656 83L1661 88L1656 93" stroke-width="1.500"/>
<rect x="1461" y="118" width="20" height="17"/><path d="M1468 118V135"/><path d="M1472 122V131L1478 126.500Z" fill="#9aa0a6" stroke="none"/>
<circle cx="1511" cy="127" r="7.500" stroke-width="2.600"/><path d="M1506 122L1516 132" stroke-width="2.600"/>
<path d="M1620 127C1625 120 1635 120 1641 127C1635 134 1625 134 1620 127Z" stroke-width="2"/>
<circle cx="1820" cy="88" r="7" stroke-width="3.500" stroke-dasharray="3.500 2"/><circle cx="1897" cy="127" r="7" stroke-width="3.500" stroke-dasharray="3.500 2"/>
</g>
<circle cx="1630.500" cy="127" r="3" fill="#9aa0a6"/>
<circle cx="1820" cy="88" r="6" fill="#9aa0a6"/><circle cx="1820" cy="88" r="2.500" fill="#292a2d"/>
<circle cx="1897" cy="127" r="6" fill="#9aa0a6"/><circle cx="1897" cy="127" r="2.500" fill="#292a2d"/>
<g fill="#5f6368"><rect x="1536" y="78" width="1" height="21"/><rect x="1795" y="78" width="1" height="21"/><rect x="1536" y="115" width="1" height="22"/><rect x="1605" y="115" width="1" height="22"/><rect x="1655" y="115" width="1" height="22"/><rect x="1871" y="115" width="1" height="22"/><rect x="1589" y="151" width="1" height="22"/></g>
<g fill="#9aa0a6"><path d="M1583 122h9l-4.500 7z"/><path d="M1566 157h9l-4.500 7z"/>
<circle cx="1859" cy="81" r="2"/><circle cx="1859" cy="88" r="2"/><circle cx="1859" cy="95" r="2"/>
<circle cx="1472" cy="928" r="2"/><circle cx="1472" cy="935" r="2"/><circle cx="1472" cy="942" r="2"/></g>
<path d="M1893 82L1905 94M1905 82L1893 94M1891 929L1903 941M1903 929L1891 941" stroke="#9aa0a6" stroke-width="2.200" fill="none"/>
<g fill="#1a73e8"><path d="M1761 82h14v10h-10l-4 4z"/><path d="M1673 155h14v10h-10l-4 4z"/></g>
<path d="M1764 85h8M1764 88.500h8M1676 158h8M1676 161.500h8" stroke="#8ab4f8" stroke-width="1"/>
<g fill="#9aa0a6"><path d="M1485 240v10l7-5z"/><path d="M1485 327v10l7-5z"/></g>
<path d="M1464 364L1469 369L1464 374" fill="none" stroke="#1a8cf0" stroke-width="2"/>
</svg>
</body></html>
